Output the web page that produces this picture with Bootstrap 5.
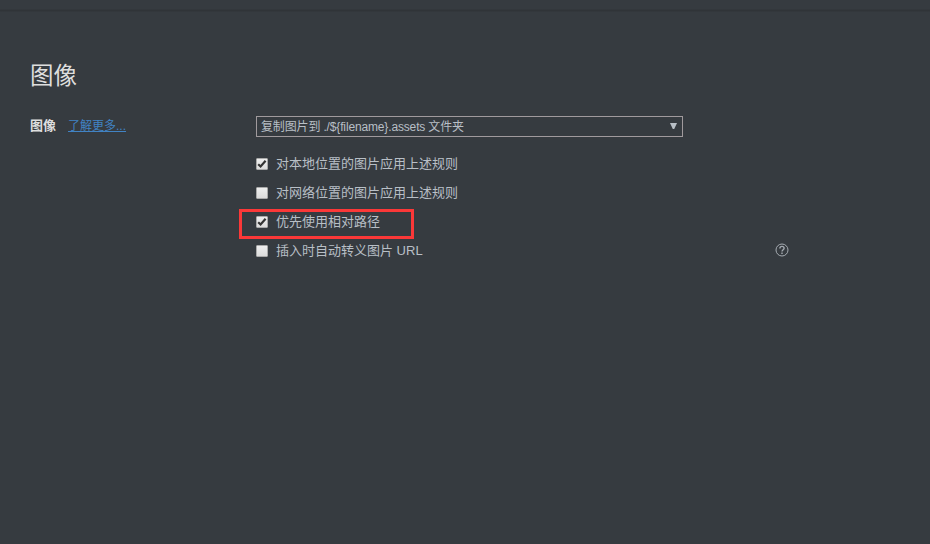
<!DOCTYPE html>
<html lang="zh-CN">
<head>
<meta charset="utf-8">
<meta name="viewport" content="width=device-width, initial-scale=1">
<title>图像</title>
<link href="https://cdn.jsdelivr.net/npm/bootstrap@5.3.0/dist/css/bootstrap.min.css" rel="stylesheet">
<style>
body{background:#363b40;color:#b8bfc6;font:13px/29px "Liberation Sans","Noto Sans CJK SC",sans-serif;height:544px;overflow:hidden}
.top-strip{height:12px;background:linear-gradient(#363b40 9px,#303438 10px,#303438 11px,#363b40)}
.settings{padding:48px 0 0 30px}
.page-title{font-size:23.5px;line-height:32px;color:#dedede;font-weight:400;margin-bottom:24px}
.side{width:226px;line-height:20px}
.side strong{color:#dedede;margin-right:12px}
.more{font-size:12px;line-height:21px;color:#4183c4;text-underline-offset:1px}
.more:hover{color:#6aa5de}
.picker{width:427px;height:21px;border:1px solid #a09a9d;font-size:12px;line-height:19px;padding:0 5px 0 4px;color:#b8bfc6}
.picker span{letter-spacing:-.15px;padding-top:2px}
.picker svg{margin-bottom:2px}
.options{width:540px;margin-top:12px}
.option{height:29px}
.check{width:12px;height:12px;border:1px solid #aaa;border-radius:1px;background:linear-gradient(#eee,#dcdcdc);margin-right:8px;flex:none}
.check svg{display:block}
.marked::after{content:"";position:absolute;left:-17px;top:2px;width:175px;height:30px;border:3px solid #fb3838}
.help{margin-right:7px;margin-top:-2px}
</style>
<script src="https://cdn.jsdelivr.net/npm/bootstrap@5.3.0/dist/js/bootstrap.bundle.min.js"></script>
</head>
<body>
<div class="top-strip"></div>
<main class="settings">
  <h1 class="page-title">图像</h1>
  <div class="d-flex align-items-start">
    <div class="side d-flex"><strong>图像</strong><a class="more" href="#">了解更多...</a></div>
    <div>
      <div class="picker d-flex align-items-center justify-content-between" role="combobox" aria-expanded="false">
        <span>复制图片到 ./${filename}.assets 文件夹</span>
        <svg width="7" height="6" viewBox="0 0 7 6"><path d="M0 0h7L4.2 6H2.8z" fill="#b8bfc6"/></svg>
      </div>
      <div class="options">
        <div class="option d-flex align-items-center"><span class="check" role="checkbox" aria-checked="true"><svg width="10" height="10" viewBox="0 0 10 10"><path d="M1.2 5.2l2.4 2.3L8.6 1.8" fill="none" stroke="#333" stroke-width="2.2"/></svg></span><span>对本地位置的图片应用上述规则</span></div>
        <div class="option d-flex align-items-center"><span class="check" role="checkbox" aria-checked="false"></span><span>对网络位置的图片应用上述规则</span></div>
        <div class="option marked position-relative d-flex align-items-center"><span class="check" role="checkbox" aria-checked="true"><svg width="10" height="10" viewBox="0 0 10 10"><path d="M1.2 5.2l2.4 2.3L8.6 1.8" fill="none" stroke="#333" stroke-width="2.2"/></svg></span><span>优先使用相对路径</span></div>
        <div class="option d-flex align-items-center"><span class="check" role="checkbox" aria-checked="false"></span><span>插入时自动转义图片 URL</span>
          <svg class="help ms-auto" width="14" height="14" viewBox="0 0 14 14" fill="none" stroke="#a5abb1"><circle cx="7" cy="7" r="6"/><path d="M4.9 5.4C4.9 4.1 5.8 3.4 7 3.4s2.1.7 2.1 1.8C9.1 6.7 7 6.8 7 8.5M7 9.4v1.5" stroke-width="1.4"/></svg>
        </div>
      </div>
    </div>
  </div>
</main>
</body>
</html>
